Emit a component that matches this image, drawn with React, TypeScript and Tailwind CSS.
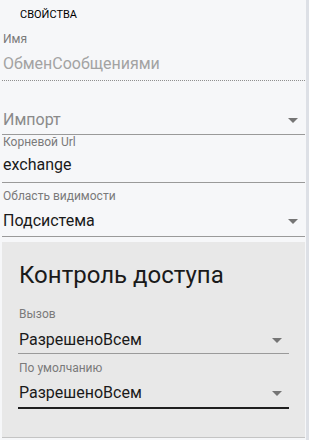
import React from "react";

const font = { fontFamily: "Roboto, 'Noto Sans', sans-serif" };

function Arrow() {
  return (
    <svg width="24" height="24" viewBox="0 0 24 24" className="absolute right-0 top-0 fill-[#757575]">
      <path d="M7 10l5 5 5-5z" />
    </svg>
  );
}

function SelectValue({ text, muted }: { text: string; muted?: boolean }) {
  return (
    <div className="relative h-6">
      <div className={"text-[16px] leading-6 " + (muted ? "text-[#8a8a8a]" : "text-[#1a1a1a]")}>{text}</div>
      <Arrow />
    </div>
  );
}

export default function App() {
  return (
    <div className="flex h-[440px] w-[309px] overflow-hidden bg-[#f6f7f9]" style={font}>
      {/* main column */}
      <div className="flex w-[306px] flex-col pl-[2px] pr-px">
        <div className="mt-2 pl-[18px] text-[11px] leading-[14px] text-black">СВОЙСТВА</div>

        {/* Имя (disabled) */}
        <div className="mt-[10px] pl-px text-[12px] leading-[14px] text-[#7a7a7a]">Имя</div>
        <div className="mt-[6px] pl-px text-[16px] leading-6 text-[#a3a3a3]">ОбменСообщениями</div>
        <div className="mt-1 border-b border-dotted border-[#8f8f8f]" />

        {/* Импорт */}
        <div className="mt-[27px] pl-px">
          <SelectValue text="Импорт" muted />
        </div>
        <div className="mt-[2px] border-b border-[#9a9a9a]" />

        {/* Корневой Url */}
        <div className="pl-px text-[12px] leading-[14px] text-[#7a7a7a]">Корневой Url</div>
        <div className="mt-1 pl-px text-[16px] leading-6 text-[#1a1a1a]">exchange</div>
        <div className="mt-[5px] border-b border-[#9a9a9a]" />

        {/* Область видимости */}
        <div className="mt-[6px] pl-px text-[12px] leading-[14px] text-[#7a7a7a]">Область видимости</div>
        <div className="mt-[6px] pl-px">
          <SelectValue text="Подсистема" />
        </div>
        <div className="mt-[3px] border-b border-[#9a9a9a]" />

        {/* Контроль доступа */}
        <div className="mt-[5px] flex flex-col border-b border-[#c4c4c4] bg-[#e8e8e8] px-4 pb-[28px] pt-[17px]">
          <div className="pl-px text-[24px] leading-8 text-[#1a1a1a]">Контроль доступа</div>

          <div className="mt-4 pl-px text-[12px] leading-[14px] text-[#7a7a7a]">Вызов</div>
          <div className="mt-[7px] pl-px">
            <SelectValue text="РазрешеноВсем" />
          </div>
          <div className="mt-px border-b border-[#9a9a9a]" />

          <div className="mt-[7px] pl-px text-[12px] leading-[14px] text-[#7a7a7a]">По умолчанию</div>
          <div className="mt-[6px] pl-px">
            <SelectValue text="РазрешеноВсем" />
          </div>
          <div className="mt-[2px] border-b-2 border-[#1f1f1f]" />
        </div>
      </div>

      {/* scrollbar strip */}
      <div className="w-[3px] bg-[#dde0e6]" />
    </div>
  );
}
